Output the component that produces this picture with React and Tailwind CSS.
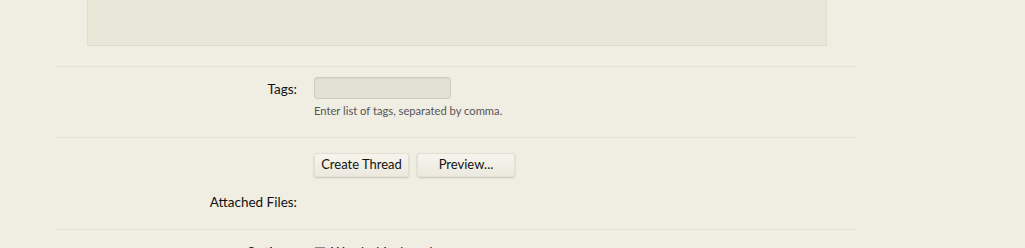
export default function App() {
  const font = { fontFamily: "Lato, 'Open Sans', sans-serif" };
  return (
    <div className="min-h-screen bg-[#f0ede2] text-[#111] overflow-hidden" style={font}>
      <div className="ml-[56px] w-[800px]">
        {/* message editor panel, cropped at top */}
        <div className="ml-[31px] w-[740px] h-[46px] bg-[#e9e7d7] border border-t-0 border-[#e0ddcc]" />

        <div className="h-[20px]" />

        {/* Tags row */}
        <div className="border-t border-[#e4e1d3] pt-[10px] pb-[21px] flex">
          <div className="w-[241px] text-right text-[13.5px] pt-[2px]">Tags:</div>
          <div className="ml-[17px]">
            <div className="w-[137px] h-[22px] rounded-[3px] bg-[#e3e1d6] border border-[#cfccbd] shadow-[inset_0_1px_1px_rgba(0,0,0,0.05)]" />
            <div className="mt-[6px] text-[11.2px] text-[#555] leading-none">Enter list of tags, separated by comma.</div>
          </div>
        </div>

        {/* Buttons + attached files */}
        <div className="border-t border-[#e4e1d3] pt-[15px] pb-[17px]">
          <div className="flex">
            <div className="w-[241px]" />
            <div className="ml-[17px] flex gap-[8px]">
              <button className="h-[24px] w-[95px] rounded-[3px] bg-gradient-to-b from-[#f6f4ec] to-[#eceadf] border border-[#e2dfd3] shadow-[0_1px_2px_rgba(0,0,0,0.18)] text-[13px] text-[#111]">
                Create Thread
              </button>
              <button className="h-[24px] w-[98px] rounded-[3px] bg-gradient-to-b from-[#f6f4ec] to-[#eceadf] border border-[#e2dfd3] shadow-[0_1px_2px_rgba(0,0,0,0.18)] text-[13px] text-[#111]">
                Preview...
              </button>
            </div>
          </div>
          <div className="flex mt-[15px]">
            <div className="w-[241px] text-right text-[13.5px]">Attached Files:</div>
          </div>
        </div>

        {/* Options row, cropped */}
        <div className="border-t border-[#e4e1d3] pt-[12px] flex">
          <div className="w-[241px] text-right text-[13.5px]">Options:</div>
          <div className="ml-[17px] flex items-center gap-[5px] text-[13px]">
            <span className="w-[12px] h-[12px] border border-[#888] bg-[#f6f6f6] rounded-[2px]" />
            <span>Watch this thread...</span>
          </div>
        </div>
      </div>
    </div>
  );
}
